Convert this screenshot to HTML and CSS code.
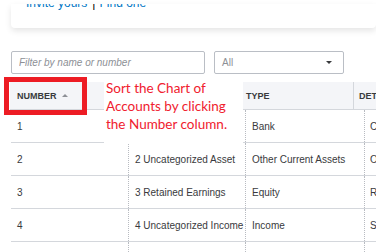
FILE: index.html
```html
<!DOCTYPE html>
<html lang="en">
  <head>
    <meta charset="UTF-8" />
    <meta name="viewport" content="width=device-width, initial-scale=1.0" />
    <title>Chart of Accounts</title>
    <link rel="stylesheet" href="styles.css">
  </head>
  <body>
    <div class="promo-card">
      <div class="promo-clip">
        <div class="promo-links">
          <a href="#">Invite yours</a><span class="caret">|</span><a href="#">Find one</a>
        </div>
      </div>
    </div>

    <div class="filters">
      <input type="text" class="filter-input" placeholder="Filter by name or number" />
      <div class="filter-select">
        <span>All</span>
        <span class="select-arrow"></span>
      </div>
    </div>

    <div class="accounts">
      <div class="accounts-head">
        <div class="head-cell col-number">NUMBER <span class="sort-up"></span></div>
        <div class="head-cell col-name">NAME</div>
        <div class="head-cell col-type">TYPE</div>
        <div class="head-cell col-detail">DETAIL TYPE</div>
      </div>

      <div class="row">
        <div class="cell col-number">1</div>
        <div class="cell col-name">1 Checking</div>
        <div class="cell col-type">Bank</div>
        <div class="cell col-detail">Checking</div>
      </div>
      <div class="row">
        <div class="cell col-number">2</div>
        <div class="cell col-name">2 Uncategorized Asset</div>
        <div class="cell col-type">Other Current Assets</div>
        <div class="cell col-detail">Other Current Assets</div>
      </div>
      <div class="row">
        <div class="cell col-number">3</div>
        <div class="cell col-name">3 Retained Earnings</div>
        <div class="cell col-type">Equity</div>
        <div class="cell col-detail">Retained Earnings</div>
      </div>
      <div class="row">
        <div class="cell col-number">4</div>
        <div class="cell col-name">4 Uncategorized Income</div>
        <div class="cell col-type">Income</div>
        <div class="cell col-detail">Sales of Product Income</div>
      </div>
      <div class="row">
        <div class="cell col-number">6</div>
        <div class="cell col-name">6 Uncategorized Expense</div>
        <div class="cell col-type">Expenses</div>
        <div class="cell col-detail">Other Miscellaneous</div>
      </div>

      <!-- annotation overlay -->
      <div class="callout-box"></div>
      <div class="callout-note">
        Sort the Chart of<br />
        Accounts by clicking<br />
        the Number column.
      </div>
    </div>
  </body>
</html>
```

FILE: styles.css
```css
* {
  box-sizing: border-box;
  margin: 0;
  padding: 0;
}

body {
  font-family: "Liberation Sans", Arial, sans-serif;
  background-color: #fff;
  color: #393a3d;
  width: 376px;
  height: 252px;
  overflow: hidden;
}

.promo-card {
  margin-left: 11px;
  height: 24px;
  background-color: #fff;
  border-radius: 0 0 4px 4px;
  box-shadow: 0 3px 6px rgba(0, 0, 0, 0.1);
}

/* the card is scrolled, only the bottom of the links shows */
.promo-clip {
  margin-top: 4px;
  height: 6px;
  overflow: hidden;
}

.promo-links {
  margin-top: -7px;
  padding-left: 15px;
  font-size: 12px;
  line-height: 12px;
  white-space: nowrap;
}

.promo-links a {
  color: #0077c5;
  text-decoration: none;
}

.caret {
  color: #000;
  margin: 0 4px 0 5px;
}

.filters {
  display: flex;
  gap: 9px;
  margin-top: 23px;
  padding-left: 11px;
}

.filter-input {
  width: 194px;
  height: 23px;
  border: 1px solid #babec5;
  border-radius: 2px;
  padding: 0 7px;
  font-family: inherit;
  font-size: 10px;
  outline: none;
}

.filter-input::placeholder {
  color: #8d9096;
  font-style: italic;
}

.filter-select {
  width: 130px;
  height: 23px;
  border: 1px solid #babec5;
  border-radius: 2px;
  padding: 0 7px;
  display: flex;
  align-items: center;
  justify-content: space-between;
  font-size: 10px;
  color: #8d9096;
}

.select-arrow {
  width: 0;
  height: 0;
  border-left: 3px solid transparent;
  border-right: 3px solid transparent;
  border-top: 3px solid #393a3d;
  margin-right: 4px;
}

.accounts {
  position: relative;
  margin-top: 8px;
}

.accounts-head {
  display: flex;
  margin-left: 10px;
  height: 28px;
  background-color: #f4f5f8;
  border-bottom: 1px solid #d4d7dc;
  width: 400px;
}

.head-cell {
  display: flex;
  align-items: center;
  flex-shrink: 0;
  font-size: 9px;
  font-weight: bold;
  white-space: nowrap;
  overflow: hidden;
}

.accounts-head .col-number {
  width: 118px;
  padding-left: 7px;
}

.accounts-head .col-name {
  width: 113px;
  color: transparent;
}

.accounts-head .col-type {
  width: 113px;
  padding-left: 5px;
  border-right: 1px solid #d4d7dc;
}

.accounts-head .col-detail {
  flex: 1 1 0;
  padding-left: 5px;
}

.sort-up {
  display: inline-block;
  width: 0;
  height: 0;
  margin-left: 5px;
  border-left: 3px solid transparent;
  border-right: 3px solid transparent;
  border-bottom: 3px solid #8d9096;
}

.row {
  display: flex;
  margin-left: 11px;
  height: 33px;
  border-bottom: 1px solid #d4d7dc;
  width: 400px;
}

.cell {
  display: flex;
  align-items: center;
  flex-shrink: 0;
  font-size: 10px;
  white-space: nowrap;
  overflow: hidden;
}

.row .col-number {
  width: 117px;
  padding-left: 6px;
}

.row .col-name {
  width: 117px;
  padding-left: 6px;
  border-left: 1px dotted #b8bbc1;
}

.row .col-type {
  width: 119px;
  padding-left: 6px;
  border-left: 1px dotted #b8bbc1;
}

.row .col-detail {
  flex: 1 1 0;
  padding-left: 5px;
  border-left: 1px dotted #b8bbc1;
}

.callout-box {
  position: absolute;
  left: 4px;
  top: -5px;
  width: 83px;
  height: 38px;
  border: 5px solid #ed1c24;
}

.callout-note {
  position: absolute;
  left: 104px;
  top: -6px;
  width: 139px;
  height: 68px;
  padding: 3px 0 0 2px;
  background-color: #fff;
  color: #f0202e;
  font-family: Lato, "Liberation Sans", sans-serif;
  font-size: 13.5px;
  line-height: 18px;
}
```
